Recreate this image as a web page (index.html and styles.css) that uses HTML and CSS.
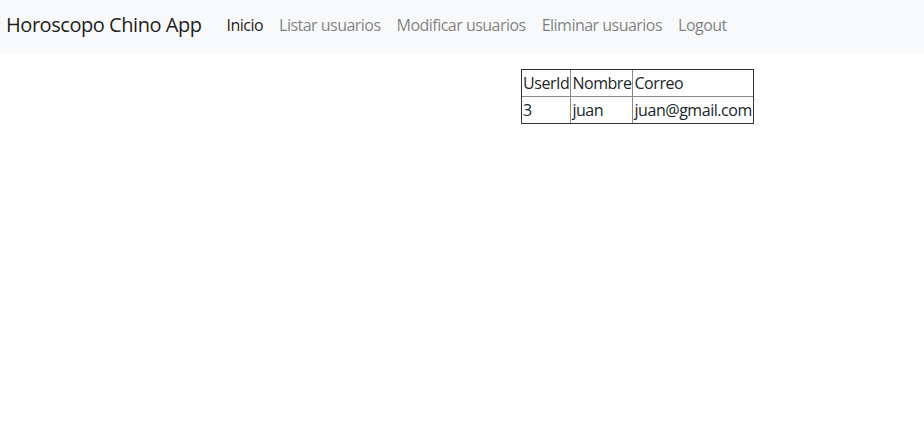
FILE: index.html
```html
<!DOCTYPE html>
<html lang="es">
<head>
<meta charset="utf-8">
<title>Horoscopo Chino App</title>
<link rel="stylesheet" href="styles.css">
</head>
<body>
<nav class="navbar">
  <a class="brand" href="#">Horoscopo Chino App</a>
  <ul class="nav">
    <li><a class="nav-link active" href="#">Inicio</a></li>
    <li><a class="nav-link" href="#">Listar usuarios</a></li>
    <li><a class="nav-link" href="#">Modificar usuarios</a></li>
    <li><a class="nav-link" href="#">Eliminar usuarios</a></li>
    <li><a class="nav-link" href="#">Logout</a></li>
  </ul>
</nav>
<main class="content">
  <table class="users">
    <tr><td>UserId</td><td>Nombre</td><td>Correo</td></tr>
    <tr><td>3</td><td>juan</td><td>juan@gmail.com</td></tr>
  </table>
</main>
</body>
</html>
```
FILE: styles.css
```css
* { box-sizing: border-box; }
html, body { margin: 0; padding: 0; background: #fff; }
body {
  font-family: "Open Sans", "Noto Sans", "Liberation Sans", sans-serif;
  font-size: 16px;
  line-height: 1.5;
  color: #212529;
}
a { text-decoration: none; }
.navbar {
  display: flex;
  align-items: center;
  height: 53px;
  padding: 0 0 4px 6px;
  background: #f8f9fa;
}
.brand {
  font-size: 20px;
  line-height: 30px;
  color: rgba(0, 0, 0, 0.9);
  margin-right: 17px;
  letter-spacing: -0.45px;
}
.nav {
  display: flex;
  list-style: none;
  margin: 0;
  padding: 0;
}
.nav-link {
  display: block;
  padding: 0 8px;
  color: rgba(0, 0, 0, 0.5);
  letter-spacing: -0.52px;
}
.nav-link.active { color: rgba(0, 0, 0, 0.9); }
.content {
  padding: 16px 0 0 521px;
}
.users {
  border-collapse: separate;
  border-spacing: 0;
  border: 1px solid #333;
}
.users td {
  padding: 1px;
  line-height: 24px;
  border-left: 1px solid #8a8a8a;
  border-top: 1px solid #8a8a8a;
  letter-spacing: -0.45px;
}
.users td:first-child { border-left: none; }
.users tr:first-child td { border-top: none; }
```
